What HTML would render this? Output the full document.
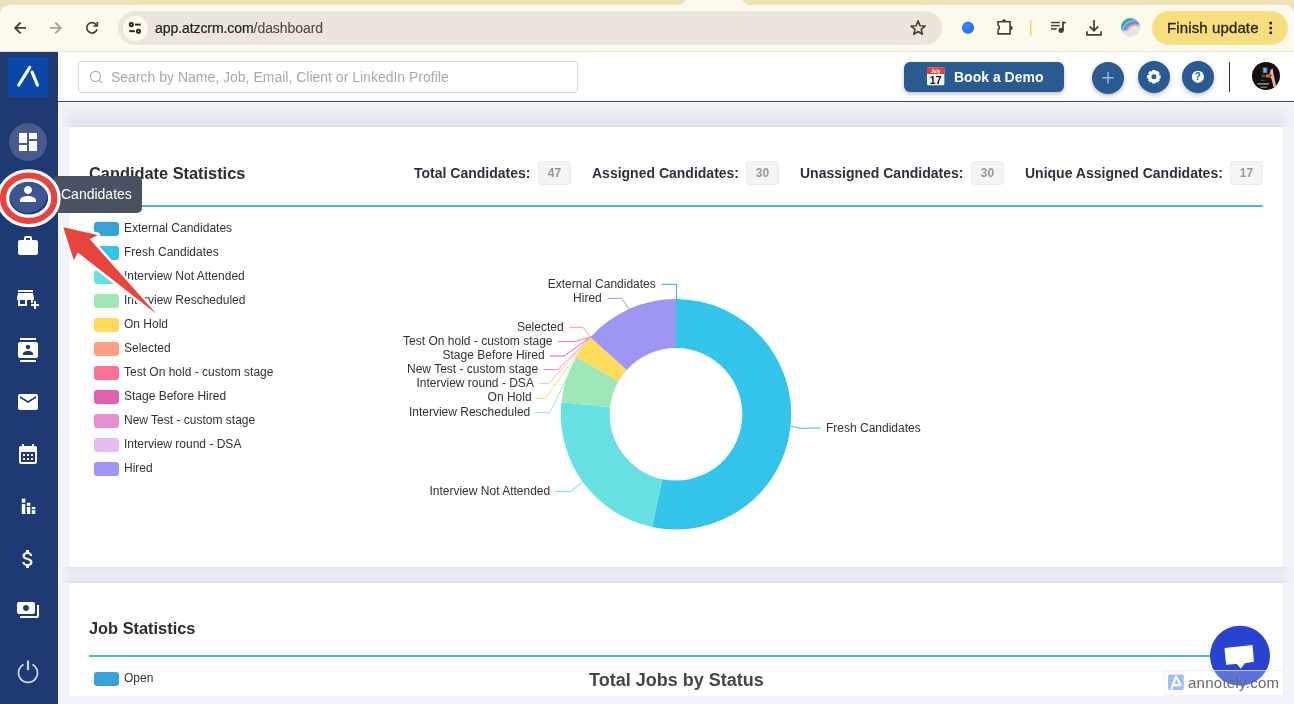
<!DOCTYPE html>
<html><head><meta charset="utf-8">
<style>
*{box-sizing:border-box;margin:0;padding:0}
html,body{width:1294px;height:704px;overflow:hidden;background:#f0f3fa;font-family:"Liberation Sans",sans-serif;}
.abs{position:absolute}
#tabstrip{left:0;top:0;width:1294px;height:20px;background:#eee1ba}
#toolbar{left:0;top:5px;width:1294px;height:47px;background:#fef9ed;border-top-left-radius:9px;border-top-right-radius:9px;border-bottom:1px solid #ece4d4}
#url{left:118px;top:11px;width:824px;height:34px;border-radius:17px;background:#ece5dd}
#urlicon{left:122.500px;top:15.500px;width:25px;height:25px;border-radius:13px;background:#fef9ed}
#urltext{left:155px;top:20px;font-size:14px;color:#1f1f1f;letter-spacing:-0.07px;-webkit-text-stroke:0.200px #1f1f1f}
#urltext span{color:#4d4a46;-webkit-text-stroke:0.100px #4d4a46}
#finish{left:1152px;top:11px;width:136px;height:34px;border-radius:17px;background:#f9de80}
#finishtxt{left:1167px;top:19px;font-size:15px;color:#2a2410;letter-spacing:0.120px;-webkit-text-stroke:0.300px #2a2410}
#sidebar{left:0;top:52px;width:58px;height:652px;background:#1f3a73}
#logo{left:8px;top:57px;width:40px;height:40px;background:#0a46a6}
#header{left:58px;top:52px;width:1236px;height:50px;background:#fff;border-bottom:1px solid #3f5168}
#search{left:78px;top:61px;width:500px;height:32px;border:1px solid #d6d8dc;border-radius:3px;background:#fff}
#searchtxt{left:111px;top:69px;font-size:14px;color:#a6a9ad}
#demo{left:904px;top:62px;width:160px;height:30px;border-radius:6px;background:#2a5a92;box-shadow:0 2px 4px rgba(0,0,0,.25)}
#demotxt{left:954px;top:69px;font-size:14px;font-weight:bold;color:#fff}
.rb{width:32px;height:32px;border-radius:16px;background:#2a5a92;top:61px;box-shadow:0 2px 4px rgba(0,0,0,.25)}
#vsep{left:1228.600px;top:62px;width:1.500px;height:30px;background:#22384f}
#avatar{left:1252px;top:62px;width:28px;height:28px;border-radius:14px;background:#1a1210}
.card{background:#fff;border-radius:3px;box-shadow:0 0 2px rgba(0,0,0,.07)}
.sh{left:60px;width:1232px;-webkit-mask-image:linear-gradient(to right,transparent,#000 12px,#000 1220px,transparent);mask-image:linear-gradient(to right,transparent,#000 12px,#000 1220px,transparent)}
#card1{left:69px;top:127px;width:1214px;height:440px}
#card2{left:69px;top:583px;width:1214px;height:113px}
.h{font-size:16.38px;font-weight:bold;color:#2d2d2d}
.hr{height:2px;background:#4fb8c4}
.stat{font-size:14px;font-weight:bold;color:#2c323c;top:165px}
.badge{top:161px;height:24px;border:1px solid #ebebec;background:#f4f4f5;border-radius:4px;font-size:12px;font-weight:bold;color:#9297a0;text-align:center;line-height:22px}
.lg{left:94px;width:25px;height:14px;border-radius:3px}
.lt{left:124px;font-size:12px;color:#333}
.sico{left:0;width:58px;text-align:center}
#wrap{position:absolute;left:0;top:0;width:1294px;height:704px;will-change:transform;overflow:hidden}
</style></head><body>
<div id="wrap">
<div class="abs" id="tabstrip"></div>
<div class="abs" id="toolbar"></div>
<svg class="abs" style="left:670px;top:0" width="90" height="6" viewBox="670 0 90 6"><path d="M674 6Q683 5.500 685.500 0L742.500 0Q745 5.500 754 6Z" fill="#fef9ed"/></svg>
<div class="abs" id="url"></div>
<div class="abs" id="urlicon"></div>
<div class="abs" id="urltext">app.atzcrm.com<span>/dashboard</span></div>
<div class="abs" id="finish"></div>
<div class="abs" id="finishtxt">Finish update</div>
<div class="abs sh" style="top:103px;height:24px;background:linear-gradient(to bottom,rgba(40,45,60,0),rgba(40,45,60,.075))"></div>
<div class="abs sh" style="top:567px;height:16px;background:linear-gradient(to bottom,rgba(40,45,60,.075),rgba(40,45,60,.03) 50%,rgba(40,45,60,.075))"></div>
<div class="abs card" id="card1"></div>
<div class="abs card" id="card2" style="border-radius:3px 3px 0 0"></div>
<div class="abs" style="left:58px;top:696px;width:1236px;height:8px;background:#eff2f9"></div>
<div class="abs" id="header"></div>
<div class="abs" id="sidebar"></div>
<div class="abs" id="logo"></div>
<div class="abs" id="search"></div>
<div class="abs" id="searchtxt">Search by Name, Job, Email, Client or LinkedIn Profile</div>
<div class="abs" id="demo"></div>
<div class="abs" id="demotxt">Book a Demo</div>
<div class="abs rb" style="left:1092px;top:62px"></div>
<div class="abs rb" style="left:1138px"></div>
<div class="abs rb" style="left:1182px"></div>
<div class="abs" id="vsep"></div>
<svg class="abs" style="left:1250px;top:60px" width="32" height="32" viewBox="1250 60 32 32"><defs><clipPath id="avc"><circle cx="1266" cy="76" r="14"/></clipPath></defs><g clip-path="url(#avc)"><rect x="1250" y="60" width="32" height="32" fill="#15100f"/><rect x="1262.800" y="67.400" width="4.500" height="5.600" rx="0.500" fill="#3f8fd0"/><rect x="1264.300" y="68.300" width="1.300" height="3.800" fill="#9cc8ea"/><circle cx="1267.400" cy="75.900" r="1.900" fill="#d9631c"/><rect x="1261.600" y="74.600" width="3.600" height="2.600" fill="#5a4a38"/><path d="M1270.800 69.500l1.800-1 1.200 7 2.400 10.500-2.600 1.200-2.200-8.800-2.400-1.600.600-3.200z" fill="#e9b4a4"/><path d="M1269.800 73.500l1.700 1.400-.300 2.600-1.800-1.200z" fill="#7a3a26"/><rect x="1260.500" y="79.800" width="4.500" height="1" fill="#6a4a3a"/><rect x="1257.400" y="83.100" width="11.600" height="1.600" fill="#8f8b8b"/><rect x="1260.500" y="86.600" width="6.500" height="1.400" fill="#777373"/></g></svg>

<div class="abs h" style="left:89px;top:164px">Candidate Statistics</div>
<div class="abs stat" style="left:414px">Total Candidates:</div><div class="abs badge" style="left:538px;width:33px">47</div>
<div class="abs stat" style="left:592px">Assigned Candidates:</div><div class="abs badge" style="left:746px;width:33px">30</div>
<div class="abs stat" style="left:800px">Unassigned Candidates:</div><div class="abs badge" style="left:971px;width:33px">30</div>
<div class="abs stat" style="left:1025px">Unique Assigned Candidates:</div><div class="abs badge" style="left:1230px;width:33px">17</div>
<div class="abs hr" style="left:89px;top:205px;width:1174px"></div>
<div class="abs lg" style="top:222px;background:#37A2DA"></div><div class="abs lt" style="top:221px">External Candidates</div>
<div class="abs lg" style="top:246px;background:#32C5E9"></div><div class="abs lt" style="top:245px">Fresh Candidates</div>
<div class="abs lg" style="top:270px;background:#67E0E3"></div><div class="abs lt" style="top:269px">Interview Not Attended</div>
<div class="abs lg" style="top:294px;background:#9FE6B8"></div><div class="abs lt" style="top:293px">Interview Rescheduled</div>
<div class="abs lg" style="top:318px;background:#FFDB5C"></div><div class="abs lt" style="top:317px">On Hold</div>
<div class="abs lg" style="top:342px;background:#ff9f7f"></div><div class="abs lt" style="top:341px">Selected</div>
<div class="abs lg" style="top:366px;background:#fb7293"></div><div class="abs lt" style="top:365px">Test On hold - custom stage</div>
<div class="abs lg" style="top:390px;background:#E062AE"></div><div class="abs lt" style="top:389px">Stage Before Hired</div>
<div class="abs lg" style="top:414px;background:#E690D1"></div><div class="abs lt" style="top:413px">New Test - custom stage</div>
<div class="abs lg" style="top:438px;background:#e7bcf3"></div><div class="abs lt" style="top:437px">Interview round - DSA</div>
<div class="abs lg" style="top:462px;background:#9d96f5"></div><div class="abs lt" style="top:461px">Hired</div>
<svg class="abs" style="left:0;top:0" width="1294" height="704" viewBox="0 0 1294 704">
<path d="M676.00 299.10A115.2 115.2 0 1 1 652.05 526.98L662.22 479.15A66.3 66.3 0 1 0 676.00 348.00Z" fill="#32C5E9"/>
<path d="M652.05 526.98A115.2 115.2 0 0 1 561.43 402.26L610.06 407.37A66.3 66.3 0 0 0 662.22 479.15Z" fill="#67E0E3"/>
<path d="M561.43 402.26A115.2 115.2 0 0 1 576.23 356.70L618.58 381.15A66.3 66.3 0 0 0 610.06 407.37Z" fill="#9FE6B8"/>
<path d="M576.23 356.70A115.2 115.2 0 0 1 590.39 337.22L626.73 369.94A66.3 66.3 0 0 0 618.58 381.15Z" fill="#FFDB5C"/>
<path d="M590.39 337.22A115.2 115.2 0 0 1 676.00 299.10L676.00 348.00A66.3 66.3 0 0 0 626.73 369.94Z" fill="#9d96f5"/>
<polyline fill="none" stroke="#37A2DA" stroke-width="1" points="661.6,284.3 676.4,284.3 676.4,299.2"/>
<polyline fill="none" stroke="#9d96f5" stroke-width="1" points="607.3,298.4 621.6,298.4 629.1,309.1"/>
<polyline fill="none" stroke="#ff9f7f" stroke-width="1" points="569.3,327.3 583.0,327.3 590.4,337.2"/>
<polyline fill="none" stroke="#fb7293" stroke-width="1" points="558.0,341.6 575.0,341.6 590.4,337.2"/>
<polyline fill="none" stroke="#E062AE" stroke-width="1" points="549.5,355.9 564.1,355.9 590.4,337.2"/>
<polyline fill="none" stroke="#E690D1" stroke-width="1" points="543.6,369.5 558.0,369.5 590.4,337.2"/>
<polyline fill="none" stroke="#e7bcf3" stroke-width="1" points="539.0,383.6 548.9,383.6 590.4,337.2"/>
<polyline fill="none" stroke="#FFDB5C" stroke-width="1" points="535.9,398.4 545.5,398.4 582.8,346.6"/>
<polyline fill="none" stroke="#9FE6B8" stroke-width="1" points="535.2,412.7 550.0,412.7 566.4,378.7"/>
<polyline fill="none" stroke="#67E0E3" stroke-width="1" points="555.3,491.6 570.5,491.6 582.8,482.0"/>
<polyline fill="none" stroke="#32C5E9" stroke-width="1" points="790.6,426.3 801.0,428.3 820.7,428.0"/>
<g font-family="Liberation Sans, sans-serif" font-size="12" fill="#333">
<text x="655.8" y="288.2" text-anchor="end">External Candidates</text>
<text x="601.8" y="302.2" text-anchor="end">Hired</text>
<text x="563.6" y="331.2" text-anchor="end">Selected</text>
<text x="552.5" y="345.2" text-anchor="end">Test On hold - custom stage</text>
<text x="544.6" y="359.2" text-anchor="end">Stage Before Hired</text>
<text x="538.2" y="373.2" text-anchor="end">New Test - custom stage</text>
<text x="533.9" y="387.2" text-anchor="end">Interview round - DSA</text>
<text x="531.6" y="401.2" text-anchor="end">On Hold</text>
<text x="530.3" y="416.2" text-anchor="end">Interview Rescheduled</text>
<text x="550.2" y="495.2" text-anchor="end">Interview Not Attended</text>
<text x="826" y="432.2" text-anchor="start">Fresh Candidates</text>
</g></svg>
<!--CARD1END-->
<div class="abs h" style="left:89px;top:619px">Job Statistics</div>
<div class="abs hr" style="left:89px;top:655px;width:1174px"></div>
<div class="abs lg" style="top:672px;height:14px;background:#37A2DA"></div><div class="abs lt" style="top:671px">Open</div>
<div class="abs" style="left:589px;top:670px;font-size:18px;font-weight:bold;color:#464646">Total Jobs by Status</div>
<!--CARD2END-->
<div class="abs" style="left:9px;top:123px;width:38px;height:38px;border-radius:19px;background:#475b8c"></div>
<div class="abs" style="left:9px;top:175px;width:38px;height:38px;border-radius:19px;background:#3d5591"></div>
<svg class="abs" style="left:16.1px;top:130.0px" width="24" height="24" viewBox="0 0 24 24"><path fill="#fff" d="M3 13h8V3H3v10zm0 8h8v-6H3v6zm10 0h8V11h-8v10zm0-18v6h8V3h-8z"/></svg>
<svg class="abs" style="left:16.1px;top:181.6px" width="24" height="24" viewBox="0 0 24 24"><path fill="#fff" d="M12 12c2.21 0 4-1.79 4-4s-1.79-4-4-4-4 1.79-4 4 1.79 4 4 4zm0 2c-2.67 0-8 1.34-8 4v2h16v-2c0-2.66-5.33-4-8-4z"/></svg>
<svg class="abs" style="left:16.2px;top:233.9px" width="24" height="24" viewBox="0 0 24 24"><path fill="#fff" d="M20 6h-4V4c0-1.11-.89-2-2-2h-4c-1.11 0-2 .89-2 2v2H4c-1.11 0-1.99.89-1.99 2L2 19c0 1.11.89 2 2 2h16c1.11 0 2-.89 2-2V8c0-1.11-.89-2-2-2zm-6 0h-4V4h4v2z"/></svg>
<svg class="abs" style="left:16.0px;top:285.8px" width="24" height="24" viewBox="0 0 24 24"><path fill="#fff" d="M15 17h2v-3h1v-2l-1-5H2l-1 5v2h1v6h9v-6h4v3zm-6 1H4v-4h5v4zM2 4h15v2H2zM20 18v-3h-2v3h-3v2h3v3h2v-3h3v-2z"/></svg>
<svg class="abs" style="left:16.2px;top:337.5px" width="24" height="24" viewBox="0 0 24 24"><path fill="#fff" d="M20 0H4v2h16V0zM4 24h16v-2H4v2zM20 4H4c-1.1 0-2 .9-2 2v12c0 1.1.9 2 2 2h16c1.1 0 2-.9 2-2V6c0-1.1-.9-2-2-2zm-8 2.75c1.24 0 2.25 1.01 2.25 2.25s-1.01 2.25-2.25 2.25S9.75 10.24 9.75 9 10.76 6.75 12 6.75zM17 17H7v-1.5c0-1.67 3.33-2.5 5-2.5s5 .83 5 2.5V17z"/></svg>
<svg class="abs" style="left:16.2px;top:389.6px" width="24" height="24" viewBox="0 0 24 24"><path fill="#fff" d="M20 4H4c-1.1 0-1.99.9-1.99 2L2 18c0 1.1.9 2 2 2h16c1.1 0 2-.9 2-2V6c0-1.1-.9-2-2-2zm0 4l-8 5-8-5V6l8 5 8-5v2z"/></svg>
<svg class="abs" style="left:15.9px;top:442.1px" width="24" height="24" viewBox="0 0 24 24"><path fill="#fff" d="M19 4h-1V2h-2v2H8V2H6v2H5c-1.11 0-1.99.9-1.99 2L3 20c0 1.1.89 2 2 2h14c1.1 0 2-.9 2-2V6c0-1.1-.9-2-2-2zm0 16H5V10h14v10zM9 14H7v-2h2v2zm4 0h-2v-2h2v2zm4 0h-2v-2h2v2zm-8 4H7v-2h2v2zm4 0h-2v-2h2v2zm4 0h-2v-2h2v2z"/></svg>
<svg class="abs" style="left:0;top:0" width="58" height="704"><g fill="#fff"><rect x="21.8" y="498.7" width="3.5" height="4"/><rect x="21.8" y="504.1" width="3.5" height="9.9"/><rect x="26.9" y="502.8" width="3.4" height="3"/><rect x="26.9" y="506.9" width="3.4" height="7.1"/><rect x="31.8" y="506.9" width="3.5" height="2.3"/><rect x="31.8" y="510.2" width="3.5" height="3.8"/></g><g stroke="#fff" stroke-width="3.2" stroke-linecap="round" fill="none"><path d="M18.8 85 L29.7 67.4"/><path d="M32.1 72.2 L37.4 85"/></g><g stroke="#cfd7ee" stroke-linecap="butt" fill="none"><path d="M28 660.600V670.100" stroke-width="2.200"/><path d="M23.640 664.460A9.500 9.500 0 1 0 32.360 664.460" stroke-width="1.750"/></g></svg>
<svg class="abs" style="left:16.0px;top:546.5px" width="24" height="24" viewBox="0 0 24 24"><path fill="#fff" d="M11.8 10.9c-2.27-.59-3-1.2-3-2.15 0-1.09 1.01-1.85 2.7-1.85 1.78 0 2.44.85 2.5 2.1h2.21c-.07-1.72-1.12-3.3-3.21-3.81V3h-3v2.16c-1.94.42-3.5 1.68-3.5 3.61 0 2.31 1.91 3.46 4.7 4.13 2.5.6 3 1.48 3 2.41 0 .69-.49 1.79-2.7 1.79-2.06 0-2.87-.92-2.98-2.1h-2.2c.12 2.19 1.76 3.42 3.68 3.83V21h3v-2.15c1.95-.37 3.5-1.5 3.5-3.55 0-2.84-2.43-3.81-4.7-4.4z"/></svg>
<svg class="abs" style="left:16.0px;top:597.8px" width="24" height="24" viewBox="0 0 24 24"><path fill="#fff" d="M19 14V6c0-1.1-.9-2-2-2H3c-1.1 0-2 .9-2 2v8c0 1.1.9 2 2 2h14c1.1 0 2-.9 2-2zm-9-1c-1.66 0-3-1.34-3-3s1.34-3 3-3 3 1.34 3 3-1.34 3-3 3zm13-6v11c0 1.1-.9 2-2 2H4v-2h17V7h2z"/></svg>
<!--SIDEBAREND-->
<svg class="abs" style="left:0;top:0" width="1294" height="52" viewBox="0 0 1294 52">
<g fill="none" stroke="#47402f" stroke-width="1.850" stroke-linecap="butt" stroke-linejoin="miter"><path d="M26 27.900H15.300M20.600 22.500L15.200 27.900L20.600 33.300"/></g>
<g fill="none" stroke="#a9a199" stroke-width="1.850" stroke-linecap="butt" stroke-linejoin="miter"><path d="M50 27.900H60.700M55.300 22.500L60.700 27.900L55.300 33.300"/></g>
<g fill="none" stroke="#47402f" stroke-width="1.700" stroke-linecap="butt" stroke-linejoin="miter"><path d="M97 29.200A5.200 5.200 0 1 1 96.300 24.900"/><path d="M97.300 21.900V26H93.300"/></g>
<g fill="none" stroke="#2a261c" stroke-width="1.900" stroke-linecap="butt"><circle cx="131.400" cy="24.600" r="1.600"/><path d="M135 24.600h5.700"/><path d="M129.200 31.200h5.700"/><circle cx="138.500" cy="31.200" r="1.600"/></g>
<polygon points="918.10,20.90 919.98,25.71 925.14,26.01 921.14,29.29 922.45,34.29 918.10,31.50 913.75,34.29 915.06,29.29 911.06,26.01 916.22,25.71" fill="none" stroke="#47402f" stroke-width="1.6" stroke-linejoin="round"/>
<defs><radialGradient id="bd" cx="0.4" cy="0.35" r="0.7"><stop offset="0" stop-color="#3a8bff"/><stop offset="1" stop-color="#1f6af0"/></radialGradient></defs><circle cx="968" cy="27.700" r="6.100" fill="url(#bd)"/>
<path d="M998 21.800H1010.100V33.900H998V30.100A2.900 2.900 0 0 0 998 25.100Z" fill="none" stroke="#47402f" stroke-width="1.600" stroke-linejoin="round"/><path d="M1002 21.400A2.100 2.100 0 0 1 1006.200 21.400ZM1010.500 25.700A2.200 2.200 0 0 1 1010.500 30.100Z" fill="#47402f"/>
<rect x="1030" y="20" width="1.500" height="15.500" fill="#f2d467"/>
<g fill="#47402f"><rect x="1051" y="21.800" width="8.700" height="1.450"/><rect x="1051" y="24.900" width="8.700" height="1.450"/><rect x="1051" y="28.100" width="5.700" height="1.550"/><circle cx="1061.100" cy="30.300" r="2.600"/><rect x="1062.100" y="21.800" width="1.800" height="8.500"/><rect x="1062.100" y="21.800" width="3.800" height="1.600"/></g>
<g fill="none" stroke="#47402f" stroke-width="1.700" stroke-linecap="butt" stroke-linejoin="miter"><path d="M1094 19.900v10.800M1089.700 26.300l4.300 4.400 4.300-4.400"/><path d="M1087 31.200v3.600h14v-3.600"/></g>
<g fill="#2a2005"><circle cx="1270.700" cy="23.100" r="1.500"/><circle cx="1270.700" cy="27.900" r="1.500"/><circle cx="1270.700" cy="32.700" r="1.500"/></g>
</svg>
<div class="abs" style="left:1120.500px;top:18.100px;width:19.400px;height:19.400px;border-radius:10px;background:linear-gradient(to bottom,rgba(228,226,228,0) 62%,#e6e3e4 72%),radial-gradient(circle 17px at 75% 82%,#e8e6e6 0,#e8e6e6 33%,#ece4c8 41%,#e9a6bf 50%,#7484e0 62%,#7090e0 70%,#70c6da 79%,#2fa98b 88%,#2fa98b 100%)"></div>
<svg class="abs" style="left:0;top:52px" width="1294" height="50" viewBox="0 52 1294 50">
<g fill="none" stroke="#a9aaad" stroke-width="1.050" stroke-linecap="butt"><circle cx="95.500" cy="76.450" r="5.100"/><path d="M99.200 80.200l2.700 2.700"/></g>
<rect x="927" y="67.500" width="17.400" height="17.700" rx="1.500" fill="#f5f5f5"/><path d="M927 69a1.500 1.500 0 0 1 1.500-1.500h14.400a1.500 1.500 0 0 1 1.500 1.500v4.900H927z" fill="#e0413b"/><text x="935.700" y="72.700" font-family="Liberation Sans" font-size="4.800" fill="#fff" text-anchor="middle" font-weight="bold">July</text><text x="935.700" y="83.600" font-family="Liberation Sans" font-size="10.500" fill="#111" text-anchor="middle" font-weight="bold">17</text>
<g stroke="#9cb9e2" stroke-width="1.500" stroke-linecap="butt"><path d="M1102.300 77.800h11.600M1108.100 72v11.600"/></g>
<g fill="#fff"><rect x="1152.1" y="70.3" width="3.600" height="13" rx="0.500" transform="rotate(0 1153.9 76.8)"/><rect x="1152.1" y="70.3" width="3.600" height="13" rx="0.500" transform="rotate(45 1153.9 76.8)"/><rect x="1152.1" y="70.3" width="3.600" height="13" rx="0.500" transform="rotate(90 1153.9 76.8)"/><rect x="1152.1" y="70.3" width="3.600" height="13" rx="0.500" transform="rotate(135 1153.9 76.8)"/><rect x="1152.1" y="70.3" width="3.600" height="13" rx="0.500" transform="rotate(180 1153.9 76.8)"/><rect x="1152.1" y="70.3" width="3.600" height="13" rx="0.500" transform="rotate(225 1153.9 76.8)"/><rect x="1152.1" y="70.3" width="3.600" height="13" rx="0.500" transform="rotate(270 1153.9 76.8)"/><rect x="1152.1" y="70.3" width="3.600" height="13" rx="0.500" transform="rotate(315 1153.9 76.8)"/><circle cx="1153.9" cy="76.8" r="5"/></g><circle cx="1153.9" cy="76.8" r="2.500" fill="#2a5a92"/>
<circle cx="1197.900" cy="76.800" r="6.100" fill="#fff"/><text x="1197.900" y="80.400" font-family="Liberation Sans" font-size="10" font-weight="bold" fill="#2a5a92" text-anchor="middle">?</text>
</svg>
<!--CHROMEICONSEND-->
<div class="abs" style="left:53px;top:176px;width:89px;height:37px;border-radius:5px;background:#4a5262"></div>
<div class="abs" style="left:61px;top:186px;font-size:14px;color:#fff">Candidates</div>
<svg class="abs" style="left:0;top:0" width="1294" height="704" viewBox="0 0 1294 704">
<ellipse cx="28.700" cy="198.200" rx="25.700" ry="22.700" fill="none" stroke="#fff" stroke-width="12.600"/>
<ellipse cx="28.700" cy="198.200" rx="25.700" ry="22.700" fill="none" stroke="#e8433f" stroke-width="6.200"/>
<polygon points="63.300,227.200 97.700,235 89.800,239.200 156.300,313.800 77.800,252.500 73.800,260.300" fill="#e8433f" stroke="#fff" stroke-width="5" stroke-linejoin="round"/>
<polygon points="63.300,227.200 97.700,235 89.800,239.200 156.300,313.800 77.800,252.500 73.800,260.300" fill="#e8433f"/>
<circle cx="1240" cy="655.800" r="30" fill="#2843d0"/>
<polygon points="1224.500,648.100 1252.600,645 1253.900,661.800 1244.800,663.200 1240.800,668.800 1236.800,664.100 1226.100,664.800" fill="#fff"/>
<rect x="1164.500" y="670.500" width="119" height="25" fill="#fff" fill-opacity="0.250" stroke="#ececec" stroke-opacity="0.700" stroke-width="1"/>
<rect x="1168" y="674.500" width="15.800" height="15.400" rx="2" fill="#9dc1f2"/>
<path d="M1171.500 688.500l4.600-12 4.400 8.500M1173.600 685.200h5.800" fill="none" stroke="#fff" stroke-width="2.200" stroke-linejoin="round" stroke-linecap="round"/>
<text x="1188" y="687.600" font-family="Liberation Sans" font-size="15" fill="#686868" textLength="91" lengthAdjust="spacing">annotely.com</text>
</svg>
<!--OVERLAYEND-->
</div>
</body></html>
